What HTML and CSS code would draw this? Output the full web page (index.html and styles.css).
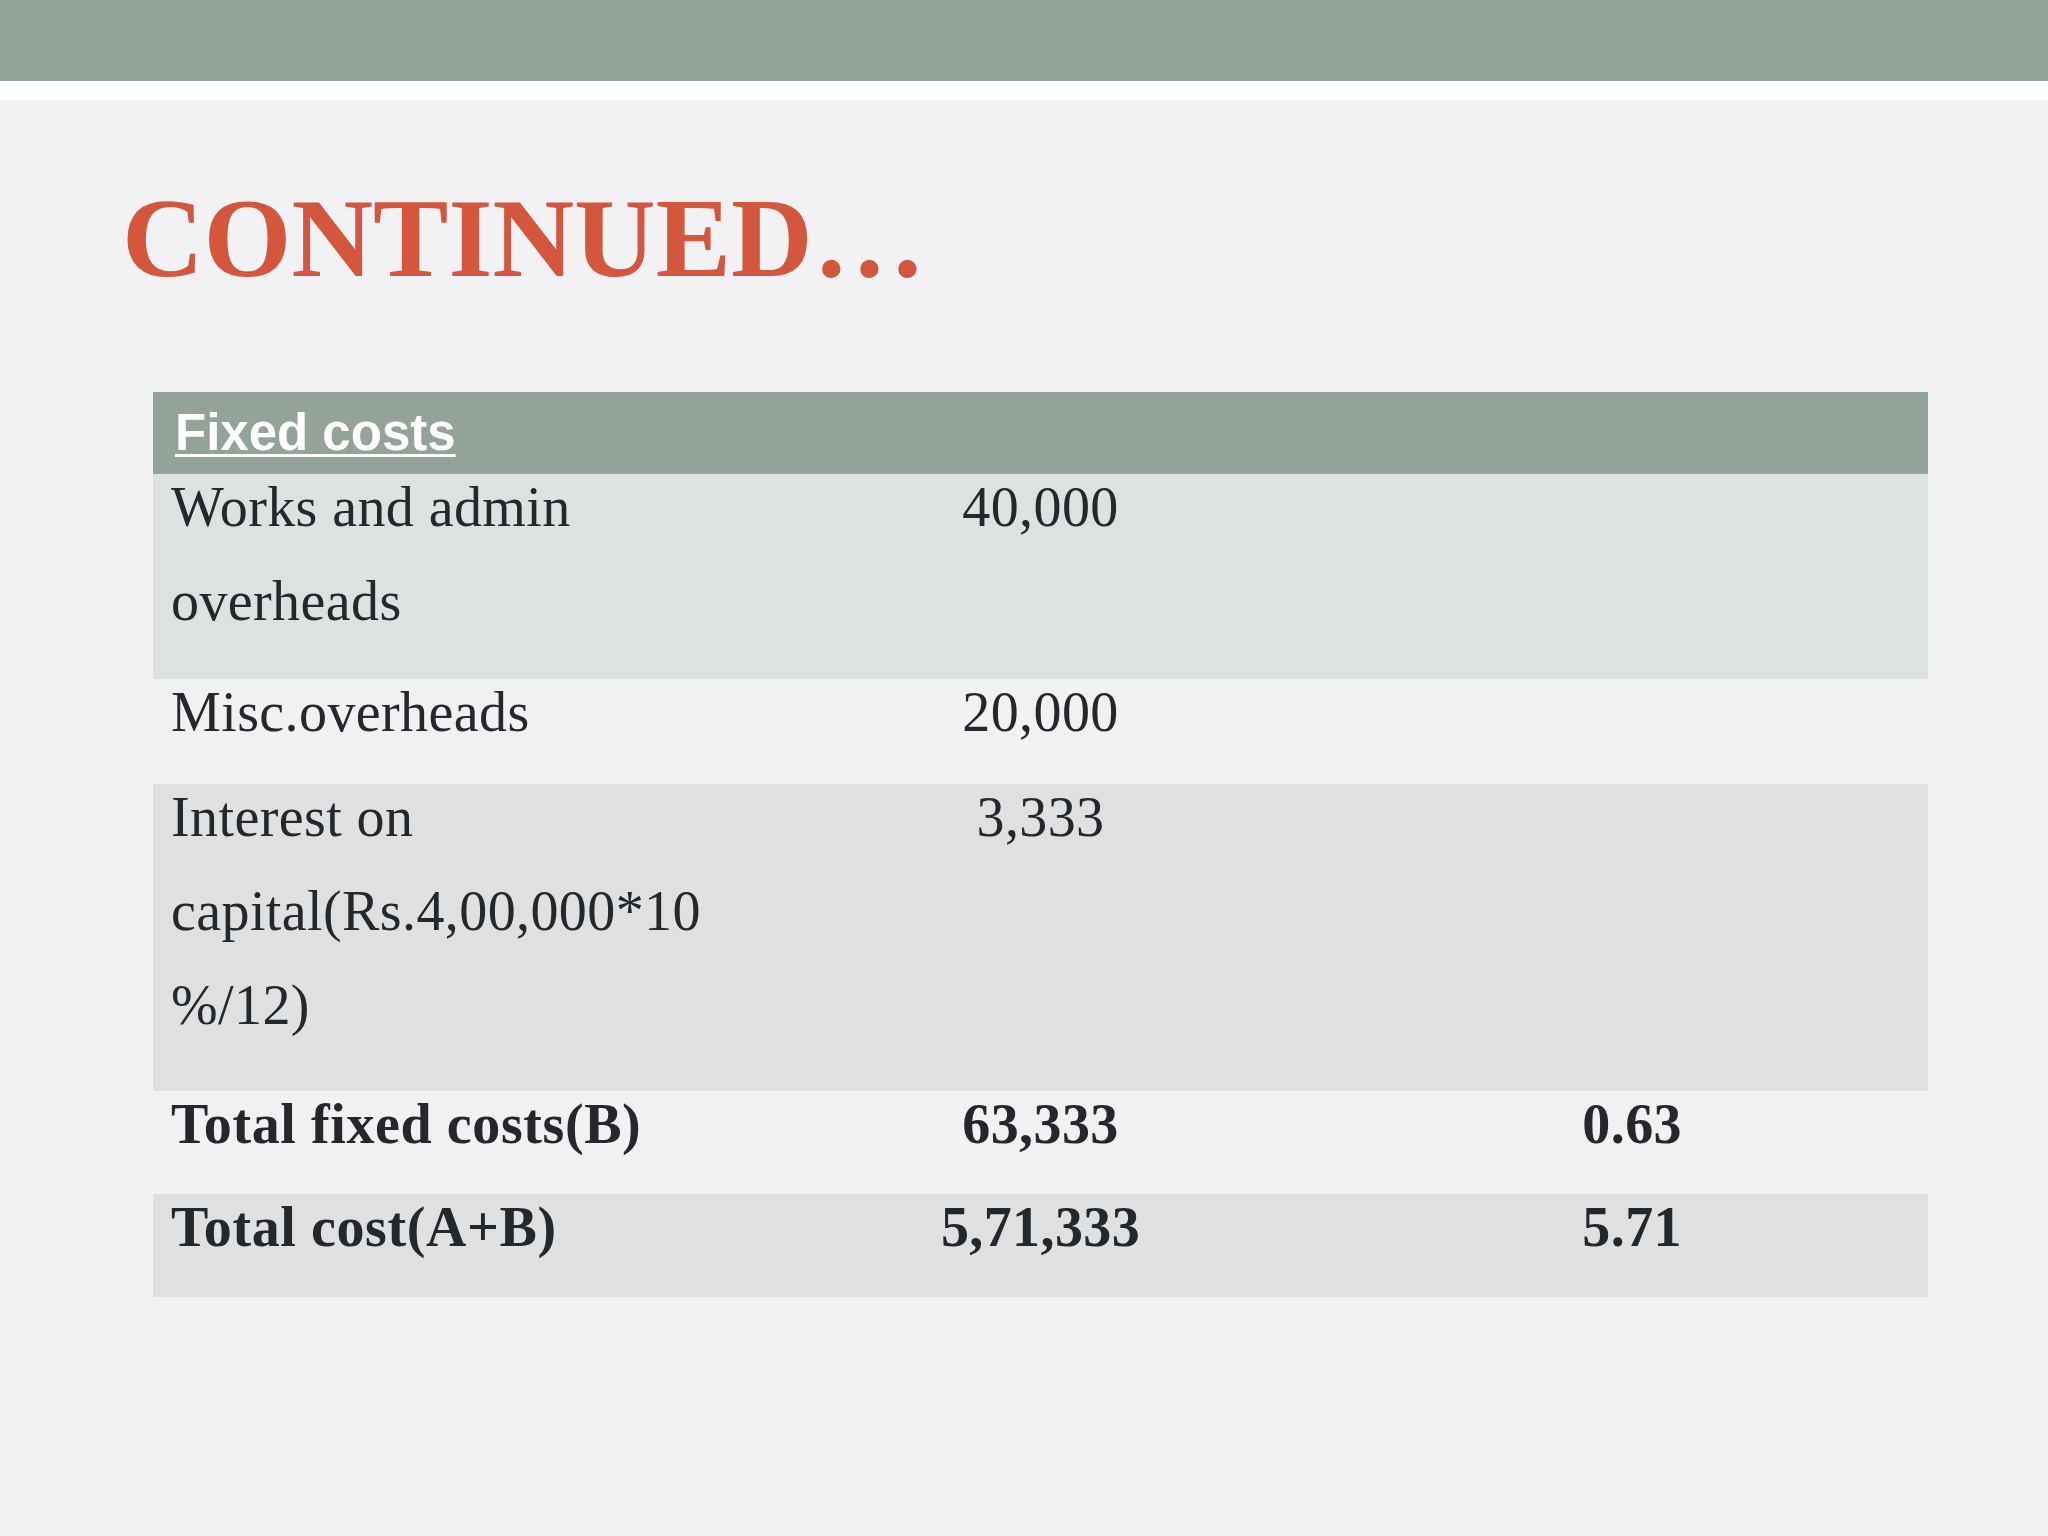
FILE: index.html
```html
<!DOCTYPE html>
<html lang="en">
<head>
<meta charset="utf-8">
<title>Continued...</title>
<link rel="stylesheet" href="styles.css">
</head>
<body>
<div class="slide">
  <div class="topbar"></div>
  <div class="stripe"></div>
  <h1 class="title">CONTINUED…</h1>
  <div class="table">
    <div class="head"><span class="head-text">Fixed costs</span></div>
    <div class="row r1">
      <div class="cell label"><div class="txt">Works and admin overheads</div></div>
      <div class="cell num"><div class="txt">40,000</div></div>
      <div class="cell num"><div class="txt"></div></div>
    </div>
    <div class="row r2">
      <div class="cell label"><div class="txt">Misc.overheads</div></div>
      <div class="cell num"><div class="txt">20,000</div></div>
      <div class="cell num"><div class="txt"></div></div>
    </div>
    <div class="row r3">
      <div class="cell label"><div class="txt">Interest on capital(Rs.4,00,000*10 %/12)</div></div>
      <div class="cell num"><div class="txt">3,333</div></div>
      <div class="cell num"><div class="txt"></div></div>
    </div>
    <div class="row r4 bold">
      <div class="cell label"><div class="txt">Total fixed costs(B)</div></div>
      <div class="cell num"><div class="txt">63,333</div></div>
      <div class="cell num"><div class="txt">0.63</div></div>
    </div>
    <div class="row r5 bold">
      <div class="cell label"><div class="txt">Total cost(A+B)</div></div>
      <div class="cell num"><div class="txt">5,71,333</div></div>
      <div class="cell num"><div class="txt">5.71</div></div>
    </div>
  </div>
</div>
</body>
</html>
```
FILE: styles.css
```css
html, body {
  margin: 0;
  padding: 0;
}
body {
  background: #f2f2f4;
  width: 2048px;
  height: 1536px;
  overflow: hidden;
}
.slide {
  width: 2048px;
  height: 1536px;
  background: #f2f2f4;
  display: flex;
  flex-direction: column;
}
.topbar {
  height: 81px;
  background: #92a39a;
}
.stripe {
  height: 19px;
  background: #fdfefe;
}
.title {
  margin: 81px 0 0 0;
  padding-left: 122px;
  font-family: "Liberation Serif", "Times New Roman", serif;
  font-weight: bold;
  font-size: 113px;
  line-height: 114px;
  height: 114px;
  color: #d4563c;
}
.table {
  margin-top: 97px;
  margin-left: 153px;
  width: 1775px;
  display: flex;
  flex-direction: column;
}
.head {
  height: 82px;
  background: #93a39a;
  padding-left: 22px;
  font-family: "Liberation Sans", Arial, sans-serif;
  font-weight: bold;
  font-size: 51px;
  line-height: 82px;
  color: #ffffff;
}
.head-text {
  text-decoration: underline;
  text-decoration-thickness: 3px;
  text-underline-offset: 4px;
}
.row {
  display: grid;
  grid-template-columns: repeat(3, 1fr);
  font-family: "Liberation Serif", "Times New Roman", serif;
  font-size: 56px;
  line-height: 94px;
  letter-spacing: 0.4px;
  color: #25282b;
}
.row.bold {
  font-weight: bold;
}
.row.bold .label {
  letter-spacing: 0.6px;
}
.cell {
  padding: 0 18px;
}
.txt {
  margin-top: -14px;
}
.num {
  text-align: center;
}
.r1 { height: 205px; background: #dce2e1; }
.r2 { height: 105px; background: #f1f1f3; }
.r3 { height: 307px; background: #dfe0e2; }
.r4 { height: 103px; background: #f1f1f3; }
.r5 { height: 103px; background: #dfe0e2; }
```
